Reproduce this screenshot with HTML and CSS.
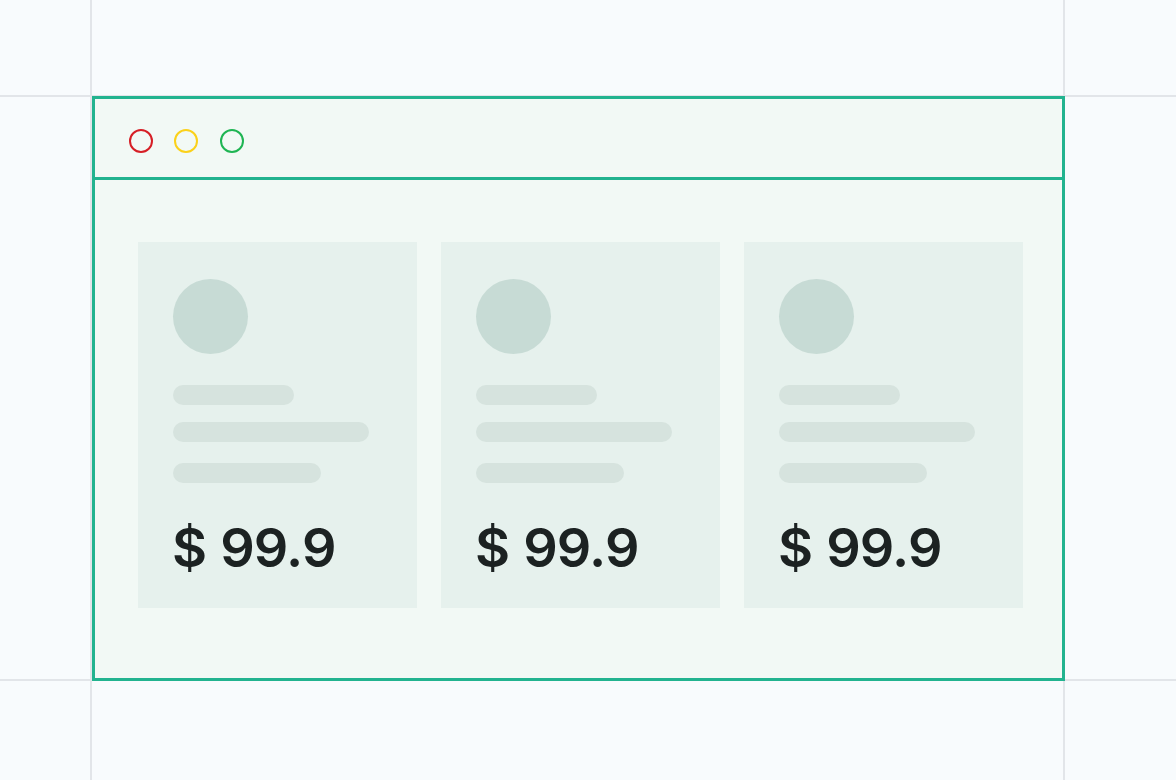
FILE: index.html
```html
<!DOCTYPE html>
<html lang="en">
<head>
<meta charset="utf-8">
<title>Pricing cards</title>
<link rel="stylesheet" href="styles.css">
</head>
<body>
<div class="guides" aria-hidden="true">
  <div class="guide guide-v guide-left"></div>
  <div class="guide guide-v guide-right"></div>
  <div class="guide guide-h guide-top"></div>
  <div class="guide guide-h guide-bottom"></div>
</div>
<div class="window">
  <div class="titlebar">
    <span class="dot dot-red"></span>
    <span class="dot dot-yellow"></span>
    <span class="dot dot-green"></span>
  </div>
  <div class="content">
    <div class="card">
      <div class="avatar"></div>
      <div class="bar bar-1"></div>
      <div class="bar bar-2"></div>
      <div class="bar bar-3"></div>
      <div class="price">$ 99.9</div>
    </div>
    <div class="card">
      <div class="avatar"></div>
      <div class="bar bar-1"></div>
      <div class="bar bar-2"></div>
      <div class="bar bar-3"></div>
      <div class="price">$ 99.9</div>
    </div>
    <div class="card">
      <div class="avatar"></div>
      <div class="bar bar-1"></div>
      <div class="bar bar-2"></div>
      <div class="bar bar-3"></div>
      <div class="price">$ 99.9</div>
    </div>
  </div>
</div>
</body>
</html>
```

FILE: styles.css
```css
* { box-sizing: border-box; }
html, body { margin: 0; padding: 0; }
body {
  width: 1176px;
  height: 780px;
  overflow: hidden;
  background: #f8fbfd;
  font-family: Inter, "Liberation Sans", sans-serif;
  padding-top: 96px;
  padding-left: 92px;
}
.guides { position: absolute; inset: 0; pointer-events: none; }
.guide { position: absolute; background: #e2e5e9; }
.guide-v { top: 0; width: 2px; height: 780px; }
.guide-h { left: 0; height: 2px; width: 1176px; }
.guide-left { left: 90px; }
.guide-right { left: 1063px; }
.guide-top { top: 95px; }
.guide-bottom { top: 679px; }

.window {
  position: relative;
  width: 973px;
  height: 585px;
  border: 3px solid #22b38f;
  background: #f2f9f5;
}
.titlebar {
  height: 81px;
  border-bottom: 3px solid #22b38f;
  display: flex;
  align-items: flex-start;
  gap: 21.5px;
  padding: 29.5px 0 0 33.7px;
}
.dot {
  width: 24px;
  height: 24px;
  border-radius: 50%;
  border: 2.7px solid;
}
.dot-red { border-color: #d61f26; }
.dot-yellow { border-color: #fbd11a; }
.dot-green { border-color: #1fb553; }

.content {
  display: flex;
  gap: 24px;
  padding: 62px 0 0 43px;
}
.card {
  width: 279px;
  height: 366px;
  background: #e6f1ed;
  padding: 37px 0 0 35px;
}
.avatar {
  width: 75px;
  height: 75px;
  border-radius: 50%;
  background: #c7dbd5;
}
.bar {
  height: 20px;
  border-radius: 10px;
  background: #d6e3de;
}
.bar-1 { width: 121px; margin-top: 31px; }
.bar-2 { width: 196px; margin-top: 17px; height: 19.5px; }
.bar-3 { width: 148px; margin-top: 21.5px; height: 19.5px; }
.price {
  margin-top: 32px;
  margin-left: -1px;
  font-size: 54px;
  font-weight: 600;
  line-height: 66px;
  color: #1c2222;
  letter-spacing: -0.8px;
  word-spacing: 1px;
}
```
